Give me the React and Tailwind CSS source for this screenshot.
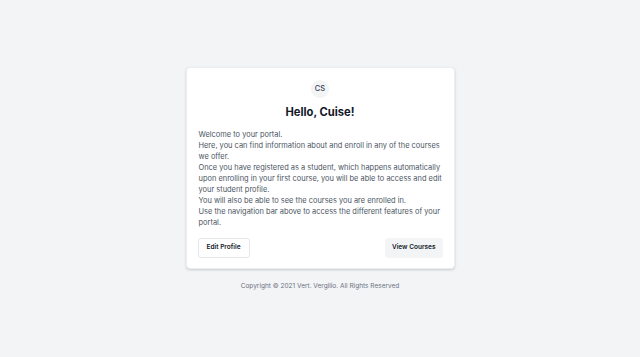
export default function App() {
  return (
    <div className="min-h-screen w-full bg-[#f3f4f6] flex flex-col items-center pt-[67px]" style={{ fontFamily: "Inter, 'Noto Sans', sans-serif" }}>
      <div className="w-[269px] bg-white rounded-[4px] shadow-[0_1px_3px_rgba(0,0,0,0.12),0_1px_2px_rgba(0,0,0,0.06)] border border-[#eceef1] px-[11px] pt-[12px] pb-[10px]">
        <div className="flex justify-center">
          <div className="w-[18px] h-[18px] rounded-full bg-[#f3f4f6] flex items-center justify-center text-[7.5px] text-[#374151] font-medium">CS</div>
        </div>
        <h1 className="text-center text-[11.2px] font-bold text-[#111827] mt-[6px] leading-[16px]">Hello, Cuise!</h1>
        <div className="mt-[9px] text-[7.45px] leading-[11px] text-[#4b5563] pl-[1px]">
          <p>Welcome to your portal.</p>
          <p>Here, you can find information about and enroll in any of the courses we offer.</p>
          <p>Once you have registered as a student, which happens automatically upon enrolling in your first course, you will be able to access and edit your student profile.</p>
          <p>You will also be able to see the courses you are enrolled in.</p>
          <p>Use the navigation bar above to access the different features of your portal.</p>
        </div>
        <div className="mt-[10px] flex justify-between items-center">
          <button className="h-[20px] px-[8px] rounded-[3px] border border-[#e5e7eb] bg-white text-[6.5px] font-semibold text-[#111827]">Edit Profile</button>
          <button className="h-[20px] px-[7px] rounded-[3px] bg-[#f3f4f6] text-[6.5px] font-semibold text-[#111827]">View Courses</button>
        </div>
      </div>
      <p className="mt-[13px] text-[6.5px] text-[#6b7280]">Copyright © 2021 Vert. Vergilio. All Rights Reserved</p>
    </div>
  );
}
